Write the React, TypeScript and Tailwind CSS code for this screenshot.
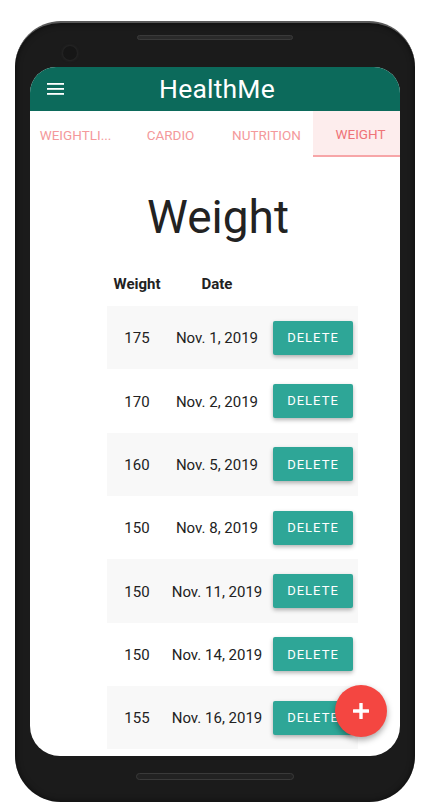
import React from 'react';

const rows = [
    { weight: 175, date: 'Nov. 1, 2019' },
    { weight: 170, date: 'Nov. 2, 2019' },
    { weight: 160, date: 'Nov. 5, 2019' },
    { weight: 150, date: 'Nov. 8, 2019' },
    { weight: 150, date: 'Nov. 11, 2019' },
    { weight: 150, date: 'Nov. 14, 2019' },
    { weight: 155, date: 'Nov. 16, 2019' },
];

const Tabs: React.FC = () => (
    <div className="flex h-[46px] shrink-0 bg-white text-[13.5px] text-[#f4999b]">
        <div className="w-[91px] shrink-0 flex items-center justify-center pt-[3px]">WEIGHTLI...</div>
        <div className="w-[99px] shrink-0 flex items-center justify-center pt-[3px]">CARDIO</div>
        <div className="w-[93px] shrink-0 flex items-center justify-center pt-[3px]">NUTRITION</div>
        <div className="w-[95px] shrink-0 flex items-center justify-center bg-[#fdeded] border-b-2 border-[#f7a6a8] text-[#ef7377] pt-[3px]">
            WEIGHT
        </div>
    </div>
);

export default function App() {
    return (
        <div className="w-[424px] h-[812px] bg-white pt-[21px] pl-[15px] font-['Roboto',sans-serif]">
            {/* phone body */}
            <div className="w-[400px] h-[781px] rounded-[46px] bg-[#1b1b1b] border-t-2 border-[#5a5a5a] flex flex-col items-center shadow-[inset_0_0_6px_rgba(0,0,0,0.6)]">
                <div className="relative w-full h-[44px] shrink-0">
                    <div className="absolute left-[122px] top-[12px] w-[156px] h-[5px] rounded-full bg-[#2a2a2a] border border-[#3a3a3a]" />
                    <div className="absolute left-[48px] top-[23px] w-[14px] h-[14px] rounded-full bg-[#161616] shadow-[0_0_3px_rgba(80,80,80,0.5)]" />
                </div>

                {/* screen */}
                <div className="relative w-[370px] h-[689px] shrink-0 rounded-t-[26px] rounded-b-[30px] overflow-hidden bg-white flex flex-col">
                    <header className="h-[44px] shrink-0 bg-[#0c6a5b] flex items-center px-[17px] text-white">
                        <svg width="18" height="14" viewBox="0 0 18 14" className="shrink-0">
                            <rect x="0" y="1" width="17" height="1.8" fill="white" />
                            <rect x="0" y="6" width="17" height="1.8" fill="white" />
                            <rect x="0" y="11" width="17" height="1.8" fill="white" />
                        </svg>
                        <h1 className="flex-1 text-center text-[26.5px] leading-none pr-[12px] ml-[-2px] tracking-[0.2px]">HealthMe</h1>
                    </header>

                    <Tabs />

                    <div className="flex flex-col items-center">
                        <h2 className="mt-[32px] ml-[6px] text-[46px] leading-[56px] text-[#222]">Weight</h2>

                        <div className="mt-[17px] ml-[35px] w-[251px] text-[15px] text-[#222]">
                            <div className="grid grid-cols-[60px_100px_91px] h-[44px] items-center font-bold text-[15px]">
                                <div className="text-center">Weight</div>
                                <div className="text-center">Date</div>
                                <div />
                            </div>
                            {rows.map((r, i) => (
                                <div
                                    key={i}
                                    className={`grid grid-cols-[60px_100px_91px] h-[63.33px] items-center ${i % 2 === 0 ? 'bg-[#f8f8f8]' : 'bg-white'}`}
                                >
                                    <div className="text-center pt-[2px]">{r.weight}</div>
                                    <div className="text-center whitespace-nowrap pt-[2px]">{r.date}</div>
                                    <div className="pl-[6px]">
                                        <button className="w-[80px] h-[34px] rounded-[2px] bg-[#2ea697] text-white text-[13px] font-normal tracking-[1px] shadow-[0_2px_4px_rgba(0,0,0,0.3)]">
                                            DELETE
                                        </button>
                                    </div>
                                </div>
                            ))}
                        </div>
                    </div>

                    <button className="absolute right-[13px] bottom-[19px] w-[52px] h-[52px] rounded-full bg-[#f44641] flex items-center justify-center shadow-[0_3px_6px_rgba(0,0,0,0.35)]">
                        <svg width="18" height="18" viewBox="0 0 18 18">
                            <rect x="7.3" y="1" width="3.4" height="16" rx="0.5" fill="white" />
                            <rect x="1" y="7.3" width="16" height="3.4" rx="0.5" fill="white" />
                        </svg>
                    </button>
                </div>

                <div className="flex-1 w-full flex items-center justify-center">
                    <div className="w-[158px] h-[7px] rounded-full bg-[#222] border border-[#3a3a3a] mt-[-6px]" />
                </div>
            </div>
        </div>
    );
}
